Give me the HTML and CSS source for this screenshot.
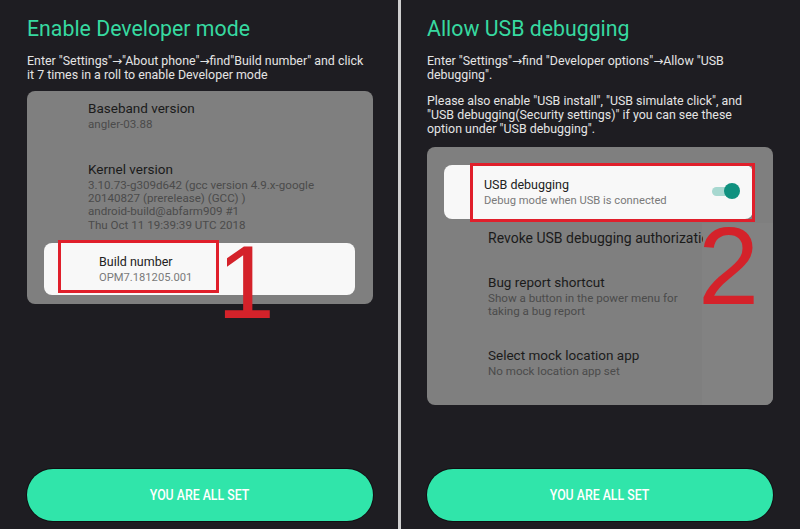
FILE: index.html
```html
<!DOCTYPE html>
<html lang="en">
<head>
<meta charset="utf-8">
<title>Developer mode guide</title>
<link rel="stylesheet" href="styles.css">
</head>
<body>
<div class="screen">
  <section class="panel panel-left">
    <h1 class="title">Enable Developer mode</h1>
    <p class="desc">Enter "Settings"<span class="arr">→</span>"About phone"<span class="arr">→</span>find"Build number" and click<br>it 7 times in a roll to enable Developer mode</p>
    <div class="card card-left">
      <div class="item item-base">
        <div class="item-title">Baseband version</div>
        <div class="item-sub">angler-03.88</div>
      </div>
      <div class="item item-kernel">
        <div class="item-title">Kernel version</div>
        <div class="item-sub">3.10.73-g309d642 (gcc version 4.9.x-google<br>20140827 (prerelease) (GCC) )<br>android-build@abfarm909 #1<br>Thu Oct 11 19:39:39 UTC 2018</div>
      </div>
      <div class="hl hl-left">
        <div class="hl-text">
          <div class="hl-title">Build number</div>
          <div class="hl-sub">OPM7.181205.001</div>
        </div>
      </div>
      <div class="mark mark-left"></div>
      <div class="step step-1">1</div>
    </div>
    <button class="cta"><span>YOU ARE ALL SET</span></button>
  </section>
  <div class="divider"></div>
  <section class="panel panel-right">
    <h1 class="title">Allow USB debugging</h1>
    <p class="desc">Enter "Settings"<span class="arr">→</span>find "Developer options"<span class="arr">→</span>Allow "USB<br>debugging".</p>
    <p class="desc desc-2">Please also enable "USB install", "USB simulate click", and<br>"USB debugging(Security settings)" if you can see these<br>option under "USB debugging".</p>
    <div class="card card-right">
      <div class="hl hl-right">
        <div class="hl-text">
          <div class="hl-title">USB debugging</div>
          <div class="hl-sub">Debug mode when USB is connected</div>
        </div>
        <div class="toggle"><span class="toggle-track"></span><span class="toggle-thumb"></span></div>
      </div>
      <div class="item item-revoke">
        <div class="item-title clip">Revoke USB debugging authorization</div>
      </div>
      <div class="item item-bug">
        <div class="item-title">Bug report shortcut</div>
        <div class="item-sub">Show a button in the power menu for<br>taking a bug report</div>
      </div>
      <div class="item item-mock">
        <div class="item-title">Select mock location app</div>
        <div class="item-sub">No mock location app set</div>
      </div>
      <div class="patch"></div>
      <div class="mark mark-right"></div>
      <div class="step step-2">2</div>
    </div>
    <button class="cta"><span>YOU ARE ALL SET</span></button>
  </section>
</div>
</body>
</html>
```
FILE: styles.css
```css
* { box-sizing: border-box; }
html, body { margin: 0; padding: 0; }
body {
  background: #1e1d22;
  font-family: Roboto, "Liberation Sans", Arial, sans-serif;
  width: 800px;
  height: 529px;
  overflow: hidden;
}
.screen {
  display: flex;
  height: 529px;
}
.panel {
  display: flex;
  flex-direction: column;
  height: 529px;
  padding-bottom: 8px;
}
.panel-left { width: 398px; padding-left: 27px; padding-right: 25px; }
.panel-right { width: 399px; padding-left: 26px; padding-right: 27px; }
.divider { width: 3px; background: #cfcfcf; }

.title {
  margin: 15px 0 0 0;
  font-weight: 400;
  font-size: 21.3px;
  line-height: 28px;
  color: #37d9a0;
  white-space: nowrap;
}
.desc {
  margin: 10.5px 0 0 0;
  font-size: 12.4px;
  line-height: 14.3px;
  color: #e4e4e4;
  white-space: nowrap;
}
.desc-2 { margin-top: 11.5px; }
.arr {
  font-family: "DejaVu Sans", sans-serif;
  font-size: 12px;
}

.card {
  position: relative;
  background: #7f7f7f;
  border-radius: 8px;
  width: 346px;
}
.card-left { margin-top: 9px; height: 213px; padding-top: 9px; }
.card-right { margin-top: 10.5px; height: 258px; padding-top: 18px; }

.item { padding-left: 61px; }
.item-title {
  font-size: 13.5px;
  line-height: 16px;
  color: #1b1b1b;
  white-space: nowrap;
}
.item-sub {
  margin-top: 2px;
  font-size: 11.6px;
  line-height: 13.4px;
  color: #4b4b4b;
  white-space: nowrap;
}
.item-kernel { margin-top: 29px; }

.hl {
  display: flex;
  align-items: center;
  background: #f8f8f8;
  border-radius: 8px;
  position: relative;
  z-index: 1;
}
.hl-left { margin: 11px 18px 0 17px; height: 52px; padding-left: 55px; }
.hl-right { margin: 0 20px 0 17px; height: 54px; padding-left: 40px; padding-right: 13px; }
.hl-text { flex: 1; }
.hl-title {
  font-size: 12.5px;
  line-height: 15px;
  color: #222;
}
.hl-sub {
  margin-top: 2px;
  font-size: 11.2px;
  line-height: 13px;
  color: #7a7a7a;
}

.toggle {
  position: relative;
  width: 28px;
  height: 16px;
  margin-top: -1px;
}
.toggle-track {
  position: absolute;
  left: 0;
  top: 3.5px;
  width: 24px;
  height: 9px;
  border-radius: 5px;
  background: #a7d8d0;
}
.toggle-thumb {
  position: absolute;
  right: 0;
  top: 0;
  width: 16px;
  height: 16px;
  border-radius: 50%;
  background: #10917f;
}

.item-revoke { margin-top: 11px; padding-left: 61px; position: relative; z-index: 1; }
.clip { width: 215px; overflow: hidden; font-size: 14px; line-height: 17px; }
.item-bug { margin-top: 27px; }
.item-mock { margin-top: 28px; }

.patch {
  position: absolute;
  left: 275px;
  top: 76px;
  width: 71px;
  height: 182px;
  background: #828282;
  border-bottom-right-radius: 8px;
  z-index: 0;
}

.mark {
  position: absolute;
  border: 3px solid #e01f2b;
  z-index: 2;
}
.mark-left { left: 31px; top: 149px; width: 161px; height: 53px; }
.mark-right { left: 43px; top: 16px; width: 285px; height: 59px; }

.step {
  position: absolute;
  font-family: "Liberation Sans", Arial, sans-serif;
  color: #d4222a;
  z-index: 3;
}
.step-1 { left: 190px; top: 139px; font-size: 104px; line-height: 104px; }
.step-2 { left: 271px; top: 64px; font-size: 110px; line-height: 110px; }

.cta {
  margin-top: auto;
  display: flex;
  align-items: center;
  justify-content: center;
  width: 346px;
  height: 52px;
  border: none;
  border-radius: 26px;
  background: #30e5aa;
  box-shadow: 0 0 0 1px rgba(0, 0, 0, 0.45);
  padding: 0;
  font-family: Roboto, "Liberation Sans", Arial, sans-serif;
  font-size: 14px;
  font-weight: 500;
  color: #ffffff;
}
.cta span { display: inline-block; transform: scaleX(0.88); }
```
